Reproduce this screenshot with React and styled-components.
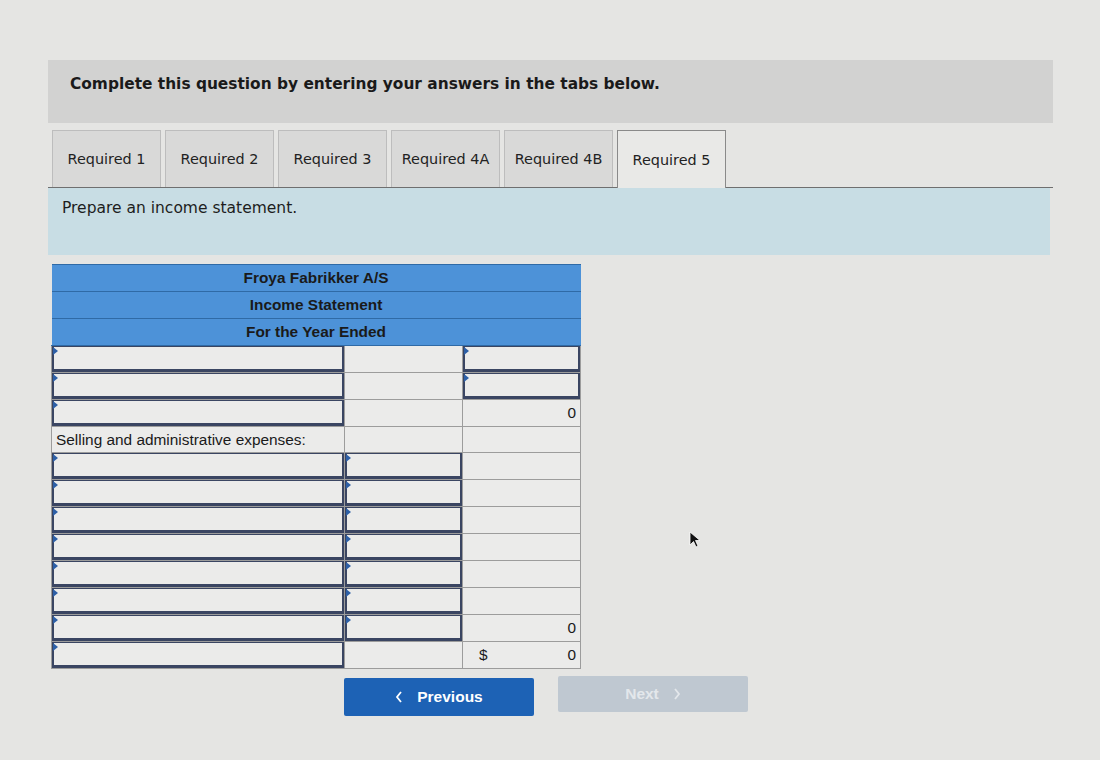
import styled, { createGlobalStyle } from 'styled-components';

const Global = createGlobalStyle`
    html, body {
        margin: 0;
        padding: 0;
        background: #e5e5e3;
    }
    body {
        width: 1100px;
        height: 760px;
        overflow: hidden;
        font-family: "DejaVu Sans", Verdana, sans-serif;
        color: #1e1e1e;
    }
`;

const Page = styled.div`
    position: relative;
    width: 1100px;
    height: 760px;
    padding: 60px 0 0 48px;
    box-sizing: border-box;
`;

const Banner = styled.div`
    width: 1005px;
    height: 63px;
    box-sizing: border-box;
    padding: 15px 0 0 22px;
    background: #d2d2d1;
    font-weight: bold;
    font-size: 15.4px;
    color: #1a1a1a;
`;

const TabBar = styled.div`
    display: flex;
    align-items: flex-end;
    gap: 4px;
    width: 1005px;
    height: 65px;
    box-sizing: border-box;
    padding-left: 4px;
    border-bottom: 1px solid #6f6f6f;
`;

const Tab = styled.div`
    width: 109px;
    box-sizing: border-box;
    display: flex;
    align-items: center;
    justify-content: center;
    font-size: 14.4px;
    color: #222;
    background: ${p => (p.$active ? '#e9e9e7' : '#d9d9d8')};
    border: 1px solid ${p => (p.$active ? '#8a8a8a' : '#bdbdbd')};
    border-bottom: none;
    margin-bottom: ${p => (p.$active ? '-1px' : '0')};
    height: ${p => (p.$active ? '58px' : '57px')};
`;

const Prompt = styled.div`
    width: 1002px;
    height: 67px;
    box-sizing: border-box;
    padding: 11px 0 0 14px;
    background: #c8dde4;
    font-size: 15.5px;
    color: #1d1d1d;
`;

const Table = styled.table`
    margin: 9px 0 0 3px;
    width: 529px;
    border-collapse: collapse;
    table-layout: fixed;
    font-family: "Liberation Sans", Arial, sans-serif;
    font-size: 15.4px;
`;

const HeadCell = styled.td`
    height: 26px;
    padding: 0;
    text-align: center;
    font-weight: bold;
    color: #1a1a1a;
    background: #4d92d8;
    border-top: 1px solid #2f6aa6;
    border-bottom: 1px solid #2f6aa6;
`;

const Cell = styled.td`
    height: 26px;
    padding: 0 ${p => (p.$input ? '0' : '4px')};
    box-sizing: border-box;
    background: #ebebea;
    border: 1px solid #9c9c9c;
    text-align: ${p => p.$align || 'left'};
    vertical-align: middle;
    color: #1a1a1a;
    line-height: 1;
`;

const Field = styled.div`
    position: relative;
    height: 26px;
    box-sizing: border-box;
    background: #ebebea;
    border: 2px solid #3a4562;
    border-top-width: 1px;
    border-bottom-width: 3px;

    &::before {
        content: '';
        position: absolute;
        left: -1px;
        top: 0;
        border-top: 4px solid transparent;
        border-bottom: 4px solid transparent;
        border-left: 5px solid #2d5fa6;
    }
`;

const Split = styled.div`
    display: flex;
    justify-content: space-between;
    padding: 0 0 0 12px;
`;

const Buttons = styled.div`
    display: flex;
    align-items: flex-start;
    gap: 24px;
    margin: 9px 0 0 296px;
`;

const Button = styled.div`
    width: 190px;
    height: ${p => (p.$disabled ? '36px' : '38px')};
    margin-top: ${p => (p.$disabled ? '-2px' : '0')};
    display: flex;
    align-items: center;
    justify-content: center;
    gap: 14px;
    border-radius: 2px;
    font-family: "Liberation Sans", Arial, sans-serif;
    font-weight: bold;
    font-size: 15.5px;
    color: ${p => (p.$disabled ? '#e3e7eb' : '#ffffff')};
    background: ${p => (p.$disabled ? '#bfc8d1' : '#1d62b5')};
`;

const Cursor = styled.svg`
    position: absolute;
    left: 689px;
    top: 531px;
`;

const Chevron = ({ dir }) => (
    <svg width="8" height="12" viewBox="0 0 8 12">
        <path
            d={dir === 'left' ? 'M6 1 L2 6 L6 11' : 'M2 1 L6 6 L2 11'}
            fill="none"
            stroke="currentColor"
            strokeWidth="1.8"
        />
    </svg>
);

// kind: 'in' = input field, 'txt' = plain cell
const rows = [
    ['in', 'txt', 'in'],
    ['in', 'txt', 'in'],
    ['in', 'txt', '0'],
    ['label', 'txt', 'txt'],
    ['in', 'in', 'txt'],
    ['in', 'in', 'txt'],
    ['in', 'in', 'txt'],
    ['in', 'in', 'txt'],
    ['in', 'in', 'txt'],
    ['in', 'in', 'txt'],
    ['in', 'in', '0'],
    ['in', 'txt', '$0'],
];

const renderCell = (kind, i) => {
    if (kind === 'in') return <Cell key={i} $input><Field /></Cell>;
    if (kind === 'label') return <Cell key={i}>Selling and administrative expenses:</Cell>;
    if (kind === '0') return <Cell key={i} $align="right">0</Cell>;
    if (kind === '$0') return (
        <Cell key={i}>
            <Split><span>$</span><span>0</span></Split>
        </Cell>
    );
    return <Cell key={i} />;
};

const tabs = ['Required 1', 'Required 2', 'Required 3', 'Required 4A', 'Required 4B', 'Required 5'];

const App = () => {
    return (
        <>
            <Global />
            <Page>
                <Banner>Complete this question by entering your answers in the tabs below.</Banner>
                <TabBar>
                    {tabs.map((t, i) => (
                        <Tab key={t} $active={i === tabs.length - 1}>{t}</Tab>
                    ))}
                </TabBar>
                <Prompt>Prepare an income statement.</Prompt>
                <Table>
                    <colgroup>
                        <col style={{ width: 293 }} />
                        <col style={{ width: 118 }} />
                        <col style={{ width: 118 }} />
                    </colgroup>
                    <tbody>
                        <tr><HeadCell colSpan={3}>Froya Fabrikker A/S</HeadCell></tr>
                        <tr><HeadCell colSpan={3}>Income Statement</HeadCell></tr>
                        <tr><HeadCell colSpan={3}>For the Year Ended</HeadCell></tr>
                        {rows.map((r, ri) => (
                            <tr key={ri}>{r.map(renderCell)}</tr>
                        ))}
                    </tbody>
                </Table>
                <Buttons>
                    <Button><Chevron dir="left" />Previous</Button>
                    <Button $disabled>Next<Chevron dir="right" /></Button>
                </Buttons>
                <Cursor width="14" height="18" viewBox="0 0 14 18">
                    <path d="M1 1 L1 14 L4.5 10.5 L7 16 L9 15 L6.5 9.5 L11 9.5 Z" fill="#111" stroke="#fff" strokeWidth="0.8" />
                </Cursor>
            </Page>
        </>
    );
};

export default App;
